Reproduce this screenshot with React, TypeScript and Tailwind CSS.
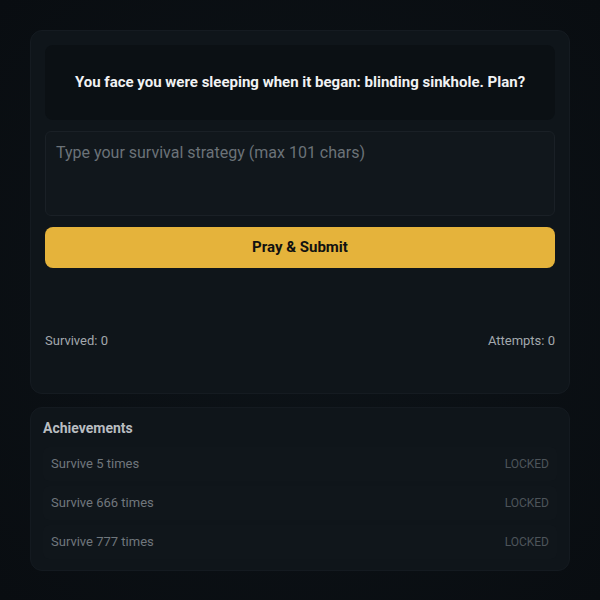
import React from "react";

const achievements = [
  { label: "Survive 5 times" },
  { label: "Survive 666 times" },
  { label: "Survive 777 times" },
];

const App = () => {
  return (
    <div
      className="min-h-[600px] w-full bg-[radial-gradient(ellipse_at_center,#0d1318_0%,#090d11_100%)] px-[30px] py-[30px]"
      style={{ fontFamily: "Roboto, 'Noto Sans', sans-serif" }}
    >
      {/* main game card */}
      <div className="rounded-xl border border-[#151b21] bg-[#0f151a] px-[14px] pt-[14px] pb-[42px]">
        <div className="flex h-[75px] items-center justify-center rounded-lg bg-[#0b1014] px-4">
          <p className="text-center text-[15px] font-bold text-[#f1f2f3]">
            You face you were sleeping when it began: blinding sinkhole. Plan?
          </p>
        </div>

        <textarea
          className="mt-[11px] block h-[85px] w-full resize-none rounded-md border border-[#1a2026] bg-[#11171c] px-[10px] py-[9px] text-[16px] text-[#d0d3d6] outline-none placeholder:text-[#6b7278]"
          placeholder="Type your survival strategy (max 101 chars)"
          maxLength={101}
        />

        <button className="mt-[11px] flex h-[41px] w-full items-center justify-center rounded-lg bg-[#e5b33b] text-[15px] font-bold text-[#111111]">
          Pray &amp; Submit
        </button>

        <div className="mt-[63px] flex justify-between text-[13px] text-[#a3a8ad]">
          <span>Survived: 0</span>
          <span>Attempts: 0</span>
        </div>
      </div>

      {/* achievements */}
      <div className="mt-[13px] rounded-xl border border-[#141a20] bg-[#0f151a] px-[12px] pt-[10px] pb-[11px]">
        <h3 className="text-[14px] font-bold text-[#b9bdc1]">Achievements</h3>
        <div className="mt-[8px] flex flex-col gap-[5px]">
          {achievements.map((a) => (
            <div
              key={a.label}
              className="flex h-[34px] items-center justify-between rounded-md bg-[#10161b] px-[8px]"
            >
              <span className="text-[13px] text-[#70777d]">{a.label}</span>
              <span className="text-[12px] text-[#4d545a]">LOCKED</span>
            </div>
          ))}
        </div>
      </div>
    </div>
  );
};

export default App;
